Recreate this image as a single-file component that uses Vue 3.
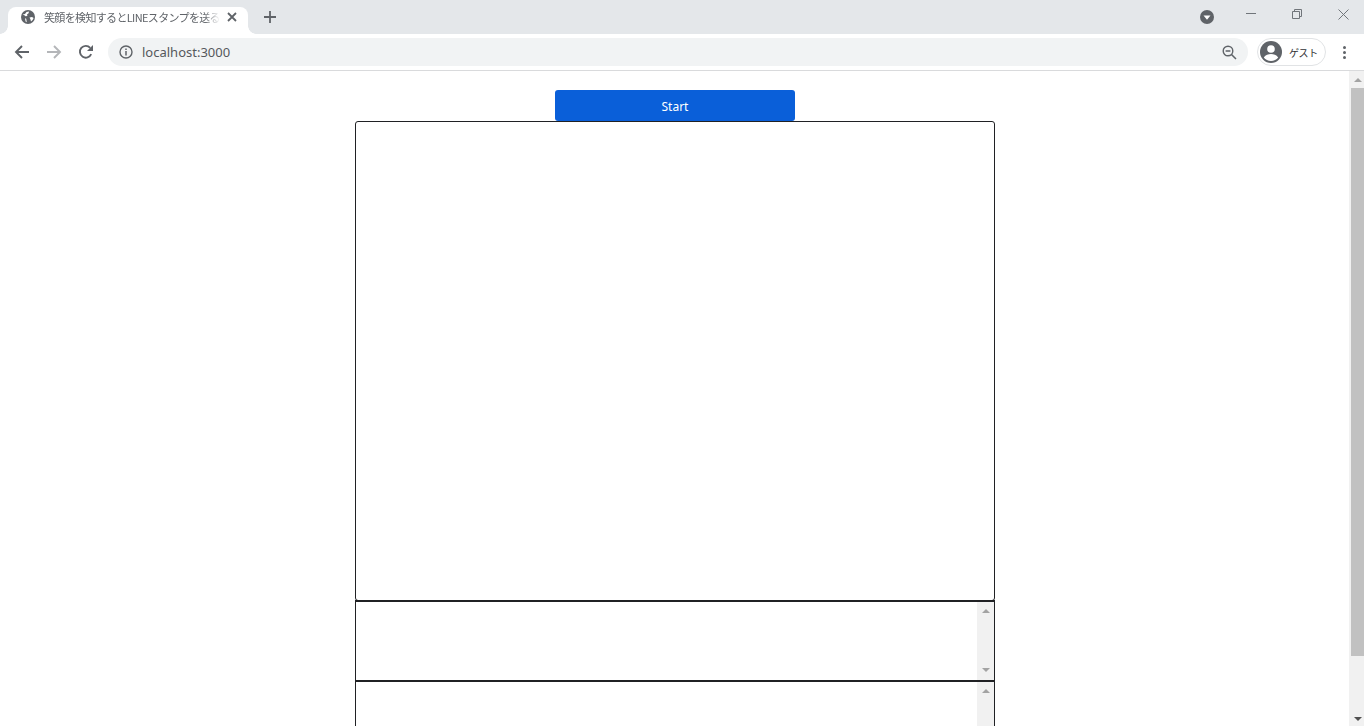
<template>
  <div class="browser">
    <!-- tab strip -->
    <div class="tabstrip">
      <div class="tab">
        <svg class="favicon" width="16" height="16" viewBox="0 0 16 16">
          <circle cx="8" cy="8" r="7" fill="#5f6368" />
          <path d="M2.6 5.4 5 5 6.5 3 9 2.6 8.6 4.2 7 5.6 7.4 7 5.4 7.2 4.4 6.2Z" fill="#fff" />
          <path d="M9.5 8.4 12 8 13.6 9 12.6 11 11 12.6 10.5 10.5Z" fill="#fff" />
          <path d="M5 9.2 6.2 9.8 6.8 13.2 5.6 12.6Z" fill="#fff" />
        </svg>
        <span class="tab-title">笑顔を検知するとLINEスタンプを送る</span>
        <svg class="tab-close" width="10" height="10" viewBox="0 0 10 10">
          <path d="M1 1 9 9M9 1 1 9" stroke="#5f6368" stroke-width="1.8" />
        </svg>
      </div>
      <svg class="new-tab" width="12" height="12" viewBox="0 0 12 12">
        <path d="M6 0V12M0 6H12" stroke="#5f6368" stroke-width="1.8" />
      </svg>
      <div class="spacer"></div>
      <div class="tab-search">
        <svg width="14" height="14" viewBox="0 0 14 14">
          <circle cx="7" cy="7" r="7" fill="#5f6368" />
          <path d="M3.5 5.5H10.5L7 9.8Z" fill="#fff" />
        </svg>
      </div>
      <div class="win-btn">
        <svg width="10" height="10" viewBox="0 0 10 10"><path d="M0 4.5H10" stroke="#70757a" /></svg>
      </div>
      <div class="win-btn">
        <svg width="10" height="10" viewBox="0 0 10 10" fill="none">
          <path d="M0.5 2.5H7.5V9.5H0.5Z M2.5 2.5V0.5H9.5V7.5H7.5" stroke="#70757a" />
        </svg>
      </div>
      <div class="win-btn">
        <svg width="11" height="11" viewBox="0 0 11 11"><path d="M0.5 0.5 10.5 10.5M10.5 0.5 0.5 10.5" stroke="#70757a" /></svg>
      </div>
    </div>

    <!-- toolbar -->
    <div class="toolbar">
      <svg class="nav-icon" width="16" height="16" viewBox="0 0 16 16" fill="none">
        <path d="M15 8H2M8 2 2 8 8 14" stroke="#5f6368" stroke-width="1.9" />
      </svg>
      <svg class="nav-icon" width="16" height="16" viewBox="0 0 16 16" fill="none">
        <path d="M1 8H14M8 2 14 8 8 14" stroke="#b4b6b9" stroke-width="1.9" />
      </svg>
      <svg class="nav-icon" width="16" height="16" viewBox="0 0 16 16" fill="none">
        <path d="M13.2 10.2A5.9 5.9 0 1 1 12.2 3.8" stroke="#5f6368" stroke-width="1.9" />
        <path d="M15 1V7H9Z" fill="#5f6368" />
      </svg>
      <div class="omnibox">
        <svg width="14" height="14" viewBox="0 0 14 14" fill="none">
          <circle cx="7" cy="7" r="6" stroke="#5f6368" stroke-width="1.4" />
          <path d="M7 6V10.5M7 3.4V5" stroke="#5f6368" stroke-width="1.5" />
        </svg>
        <span class="url">localhost:3000</span>
        <svg class="zoom-icon" width="15" height="15" viewBox="0 0 15 15" fill="none">
          <circle cx="6" cy="6" r="4.8" stroke="#5f6368" stroke-width="1.4" />
          <path d="M3.6 6H8.4M9.5 9.5 14 14" stroke="#5f6368" stroke-width="1.5" />
        </svg>
      </div>
      <div class="profile">
        <svg width="24" height="24" viewBox="0 0 24 24">
          <circle cx="12" cy="12" r="11" fill="#5f6368" />
          <circle cx="12" cy="9" r="3.8" fill="#fff" />
          <path d="M4.8 17.5C6.5 14.8 9.5 14 12 14S17.5 14.8 19.2 17.5C17.5 19.8 15 21 12 21S6.5 19.8 4.8 17.5Z" fill="#fff" />
        </svg>
        <span class="profile-name">ゲスト</span>
      </div>
      <div class="menu-dots"><i></i><i></i><i></i></div>
    </div>

    <!-- page viewport -->
    <div class="viewport">
      <div class="page">
        <button class="start">Start</button>
        <div class="video-box"></div>
        <div v-for="n in logs" :key="n" class="log-box">
          <div class="log-scroll">
            <span class="arrow up"></span>
            <span class="arrow down"></span>
          </div>
        </div>
      </div>
      <div class="page-scrollbar">
        <span class="sb-arrow up"></span>
        <div class="sb-thumb"></div>
        <span class="sb-arrow down"></span>
      </div>
    </div>
  </div>
</template>

<script setup>
const logs = [1, 2];
</script>

<style>
html,
body {
  margin: 0;
  height: 100%;
  overflow: hidden;
  background: #fff;
}
</style>

<style scoped>
.browser {
  width: 1364px;
  height: 726px;
  display: flex;
  flex-direction: column;
  overflow: hidden;
  font-family: "Noto Sans", "Noto Sans CJK JP", sans-serif;
}

.tabstrip {
  height: 34px;
  background: #e4e7ea;
  display: flex;
  align-items: flex-start;
  flex-shrink: 0;
  overflow: hidden;
}

.tab {
  position: relative;
  margin: 7px 0 0 8px;
  width: 240px;
  height: 27px;
  box-sizing: border-box;
  padding: 0 12px;
  background: #fff;
  border-radius: 8px 8px 0 0;
  display: flex;
  align-items: center;
}

/* little flares at the bottom corners of the active tab */
.tab::before,
.tab::after {
  content: "";
  position: absolute;
  bottom: 0;
  width: 8px;
  height: 8px;
}

.tab::before {
  left: -8px;
  background: radial-gradient(circle at 0 0, transparent 7.5px, #fff 8px);
}

.tab::after {
  right: -8px;
  background: radial-gradient(circle at 100% 0, transparent 7.5px, #fff 8px);
}

.favicon {
  flex-shrink: 0;
  margin-top: -7px;
}

.tab-title {
  margin: -7px 0 0 8px;
  width: 176px;
  flex-shrink: 0;
  font-family: "Noto Sans CJK JP", sans-serif;
  font-size: 11px;
  letter-spacing: -0.65px;
  color: #5f6368;
  white-space: nowrap;
  overflow: hidden;
  -webkit-mask-image: linear-gradient(to right, #000 160px, transparent 176px);
  mask-image: linear-gradient(to right, #000 160px, transparent 176px);
}

.tab-close {
  flex-shrink: 0;
  margin: -7px 0 0 7px;
}

.new-tab {
  margin: 11px 0 0 16px;
}

.spacer {
  flex: 1;
}

.tab-search {
  display: flex;
  margin: 10px 12px 0 0;
}

.win-btn {
  width: 46px;
  height: 28px;
  box-sizing: border-box;
  padding-left: 4px;
  display: flex;
  justify-content: center;
  align-items: center;
}

.toolbar {
  height: 37px;
  box-sizing: border-box;
  background: #fff;
  border-bottom: 1px solid #d9dadc;
  display: flex;
  align-items: center;
  flex-shrink: 0;
  padding-left: 14px;
}

.nav-icon {
  margin-right: 16px;
  flex-shrink: 0;
}

.omnibox {
  width: 1140px;
  height: 28px;
  margin-left: -2px;
  box-sizing: border-box;
  padding: 0 11px;
  background: #f1f3f4;
  border-radius: 14px;
  display: flex;
  align-items: center;
}

.url {
  margin-left: 9px;
  font-size: 13px;
  color: #55585c;
}

.zoom-icon {
  margin-left: auto;
}

.profile {
  margin-left: 9px;
  width: 69px;
  height: 28px;
  box-sizing: border-box;
  border: 1px solid #e1e3e5;
  border-radius: 14px;
  display: flex;
  align-items: center;
  padding-left: 1px;
}

.profile-name {
  margin-left: 6px;
  font-family: "Noto Sans CJK JP", sans-serif;
  font-size: 10px;
  letter-spacing: -0.4px;
  color: #303134;
}

.menu-dots {
  margin-left: 17px;
  display: flex;
  flex-direction: column;
  gap: 2px;
}

.menu-dots i {
  display: block;
  width: 3px;
  height: 3px;
  border-radius: 50%;
  background: #5f6368;
}

.viewport {
  flex: 1;
  min-height: 0;
  display: flex;
}

.page {
  flex: 1;
  display: flex;
  flex-direction: column;
  align-items: center;
  padding-top: 19px;
  padding-left: 1px;
  overflow: hidden;
}

.start {
  width: 240px;
  height: 31px;
  flex-shrink: 0;
  border: none;
  border-radius: 3px;
  background: #0a5fd9;
  color: #fff;
  font-family: "Noto Sans", sans-serif;
  font-size: 12px;
  padding: 2px 0 0;
}

.video-box {
  width: 640px;
  height: 480px;
  flex-shrink: 0;
  box-sizing: border-box;
  border: 1px solid #202124;
  border-radius: 3px;
  margin-bottom: -1px;
}

.log-box {
  width: 640px;
  height: 80px;
  flex-shrink: 0;
  box-sizing: border-box;
  border: 1px solid #202124;
  border-top-width: 2px;
  border-bottom: 0;
  display: flex;
  justify-content: flex-end;
}

.log-scroll {
  position: relative;
  width: 17px;
  background: #f1f1f1;
}

.arrow {
  position: absolute;
  left: 4.5px;
  width: 0;
  height: 0;
  border-left: 4px solid transparent;
  border-right: 4px solid transparent;
}

.arrow.up {
  top: 7px;
  border-bottom: 4px solid #a3a3a3;
}

.arrow.down {
  bottom: 8px;
  border-top: 4px solid #a3a3a3;
}

.page-scrollbar {
  position: relative;
  width: 15px;
  background: #f1f1f1;
  flex-shrink: 0;
}

.sb-thumb {
  position: absolute;
  top: 17px;
  left: 2px;
  right: 0;
  height: 568px;
  background: #c1c1c1;
}

.sb-arrow {
  position: absolute;
  left: 4.5px;
  width: 0;
  height: 0;
  border-left: 4px solid transparent;
  border-right: 4px solid transparent;
}

.sb-arrow.up {
  top: 7px;
  border-bottom: 4px solid #a3a3a3;
}

.sb-arrow.down {
  bottom: 5px;
  border-top: 4px solid #505050;
}
</style>
